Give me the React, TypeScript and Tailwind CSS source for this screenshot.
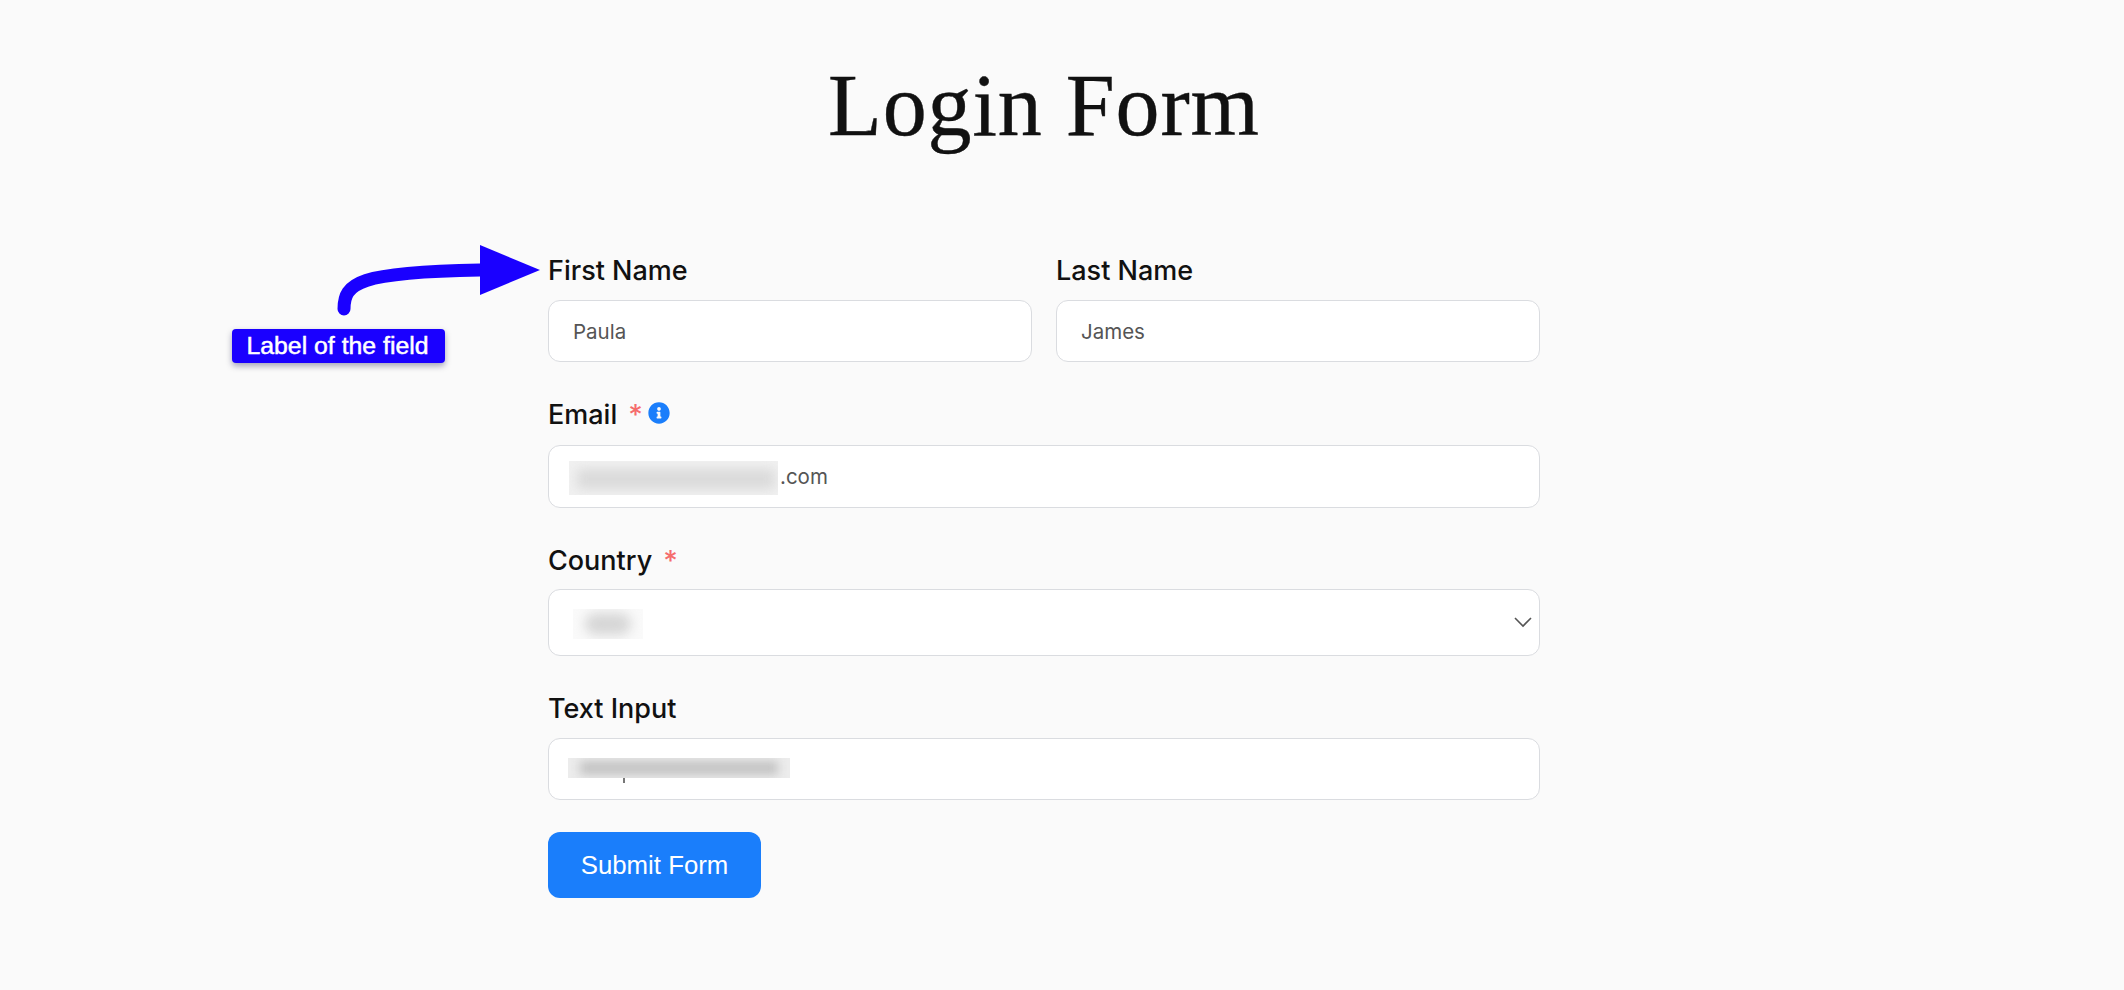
import { FaInfoCircle } from "react-icons/fa";

const label = "h-9 flex items-center pt-[2px] text-[27px] font-medium text-[#111] leading-9 font-['Inter',sans-serif]";
const box = "bg-white border border-[#dadce0] rounded-[12px] flex items-center pl-6 pt-[2px] text-[20.5px] text-[#555] font-['Inter',sans-serif]";

function Star() {
  return <span className="ml-[11px] text-[28px] text-[#f56c6c] font-medium leading-9">*</span>;
}

export default function App() {
  return (
    <div className="relative min-h-[990px] bg-[#fafafa] overflow-hidden">
      <div className="ml-[548px] w-[992px]">
        <h1 className="h-[252px] pt-[54px] text-center text-[88px] tracking-[0.9px] leading-[104px] text-[#111] [-webkit-text-stroke:0.4px_#111] font-['Liberation_Serif',serif]">
          Login Form
        </h1>

        <div className="flex gap-6">
          <div className="flex-1">
            <div className={label}>First Name</div>
            <div className={box + " mt-3 h-[62px]"}>Paula</div>
          </div>
          <div className="flex-1">
            <div className={label}>Last Name</div>
            <div className={box + " mt-3 h-[62px]"}>James</div>
          </div>
        </div>

        <div className="mt-[34px]">
          <div className={label}>
            Email
            <Star />
            <FaInfoCircle className="ml-[5px] -mt-[4px] text-[#1a7efb]" size={22} />
          </div>
          <div className={box + " mt-[13px] h-[63px] pl-[20px]"}>
            <div className="h-[34px] w-[209px] overflow-hidden bg-[#f1f1f1]">
              <div className="mx-2 my-2 h-[20px] w-[198px] bg-[#dadada] blur-[6px]" />
            </div>
            <span className="ml-[2px]">.com</span>
          </div>
        </div>

        <div className="mt-[34px]">
          <div className={label}>
            Country
            <Star />
          </div>
          <div className={box + " relative mt-[11px] h-[67px] pl-[24px]"}>
            <div className="h-[30px] w-[70px] overflow-hidden bg-[#fafafa]">
              <div className="mx-3 my-[4px] h-[22px] w-[46px] rounded-full bg-[#d6d6d6] blur-[6px]" />
            </div>
            <svg className="absolute right-[7px] top-[27px]" width="18" height="11" viewBox="0 0 18 11" fill="none">
              <path d="M1 1l8 8 8-8" stroke="#555" strokeWidth="1.6" />
            </svg>
          </div>
        </div>

        <div className="mt-[34px]">
          <div className={label}>Text Input</div>
          <div className={box + " relative mt-[12px] h-[62px] pl-[19px]"}>
            <div className="-mt-[4px] h-[20px] w-[222px] overflow-hidden bg-[#ececec]">
              <div className="mx-3 my-[3px] h-[14px] w-[198px] bg-[#c4c4c4] blur-[5px]" />
            </div>
            <span className="absolute left-[74px] top-[39px] h-[5px] w-[1.5px] bg-[#777]" />
          </div>
        </div>

        <button className="mt-[32px] h-[66px] w-[213px] rounded-[12px] bg-[#1a7efb] text-[25.8px] text-white font-['Liberation_Sans',sans-serif]">
          Submit Form
        </button>
      </div>

      <svg className="absolute left-[330px] top-[240px]" width="215" height="80" viewBox="330 240 215 80" fill="none">
        <path d="M344 309c0-26 14-37 136-39" stroke="#1a00ff" strokeWidth="13" strokeLinecap="round" />
        <path d="M480 245l60 25-60 25z" fill="#1a00ff" />
      </svg>
      <div className="absolute left-[232px] top-[329px] h-[34px] w-[213px] rounded-[4px] bg-[#1a00ff] pr-[2px] shadow-[0_3px_6px_rgba(0,0,60,0.35)] flex items-center justify-center text-[24.8px] text-white [-webkit-text-stroke:0.5px_white] font-['Liberation_Sans',sans-serif]">
        Label of the field
      </div>
    </div>
  );
}
